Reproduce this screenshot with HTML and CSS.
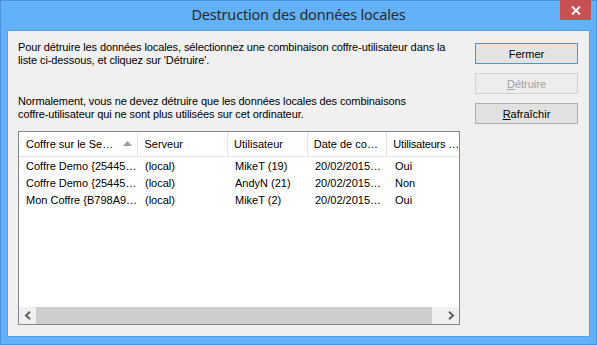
FILE: index.html
```html
<!DOCTYPE html>
<html lang="fr">
<head>
<meta charset="utf-8">
<title>Destruction des données locales</title>
<link rel="stylesheet" href="styles.css">
</head>
<body>
<div class="window">
  <div class="titlebar">
    <div></div>
    <div class="title">Destruction des données locales</div>
    <div class="close">
      <svg width="10" height="9" viewBox="0 0 10 9"><path d="M1 0.5 L9 8.5 M9 0.5 L1 8.5" stroke="#fff" stroke-width="2" fill="none"/></svg>
    </div>
  </div>
  <div class="client">
    <div class="main">
      <p class="para first">Pour détruire les données locales, sélectionnez une combinaison coffre-utilisateur dans la<br>liste ci-dessous, et cliquez sur 'Détruire'.</p>
      <p class="para second">Normalement, vous ne devez détruire que les données locales des combinaisons<br>coffre-utilisateur qui ne sont plus utilisées sur cet ordinateur.</p>
      <div class="list">
        <div class="header">
          <div class="col c1 hcell">Coffre sur le Se…<span class="sort"><svg width="9" height="5" viewBox="0 0 9 5"><path d="M0 5 L4.5 0 L9 5 Z" fill="#9b9b9b"/></svg></span></div>
          <div class="col c2 hcell">Serveur</div>
          <div class="col c3 hcell">Utilisateur</div>
          <div class="col c4 hcell">Date de co…</div>
          <div class="col c5 hcell last">Utilisateurs …</div>
        </div>
        <div class="rows">
          <div class="row"><div class="col c1">Coffre Demo {25445…</div><div class="col c2">(local)</div><div class="col c3">MikeT (19)</div><div class="col c4">20/02/2015…</div><div class="col c5">Oui</div></div>
          <div class="row"><div class="col c1">Coffre Demo {25445…</div><div class="col c2">(local)</div><div class="col c3">AndyN (21)</div><div class="col c4">20/02/2015…</div><div class="col c5">Non</div></div>
          <div class="row"><div class="col c1">Mon Coffre {B798A9…</div><div class="col c2">(local)</div><div class="col c3">MikeT (2)</div><div class="col c4">20/02/2015…</div><div class="col c5">Oui</div></div>
        </div>
        <div class="hscroll">
          <div class="arrow"><svg width="8" height="9" viewBox="0 0 8 9"><path d="M6 0.8 L2 4.5 L6 8.2" stroke="#606060" stroke-width="2" fill="none"/></svg></div>
          <div class="thumb"></div>
          <div class="track"></div>
          <div class="arrow"><svg width="8" height="9" viewBox="0 0 8 9"><path d="M2 0.8 L6 4.5 L2 8.2" stroke="#606060" stroke-width="2" fill="none"/></svg></div>
        </div>
      </div>
    </div>
    <div class="buttons">
      <div class="btn default">Fermer</div>
      <div class="btn disabled"><u>D</u>étruire</div>
      <div class="btn"><u>R</u>afraîchir</div>
    </div>
  </div>
</div>
</body>
</html>
```
FILE: styles.css
```css
* { box-sizing: border-box; }
html, body { margin: 0; padding: 0; }
body {
  width: 597px;
  height: 345px;
  overflow: hidden;
  font-family: "Liberation Sans", Arial, sans-serif;
  font-size: 11px;
  color: #000;
}
.window {
  width: 597px;
  height: 345px;
  background: #63b1f8;
  border: 1px solid #4d92dc;
  display: flex;
  flex-direction: column;
}
.titlebar {
  height: 29px;
  display: grid;
  grid-template-columns: 1fr auto 1fr;
  align-items: start;
}
.title {
  font-family: "Noto Sans", "Open Sans", sans-serif;
  font-size: 14.5px;
  color: #2a2a2a;
  line-height: 29px;
  margin-top: -1px;
  letter-spacing: -0.2px;
}
.close {
  justify-self: end;
  width: 31px;
  height: 20px;
  margin-top: -1px;
  margin-right: 5px;
  background: #c75050;
  display: flex;
  align-items: center;
  justify-content: center;
}
.client {
  flex: 1;
  margin: 0 6px 7px 6px;
  background: #f0f0f0;
  border: 1px solid #579de6;
  display: flex;
  padding: 12px 11px 11px 10px;
}
.main {
  width: 442px;
  display: flex;
  flex-direction: column;
}
.para {
  margin: 0;
  line-height: 13px;
  white-space: nowrap;
  letter-spacing: -0.1px;
}
.first { margin-top: -2px; }
.second { margin-top: 28px; }
.list {
  margin-top: 10px;
  flex: 1;
  background: #fff;
  border: 1px solid #828790;
  display: flex;
  flex-direction: column;
}
.header {
  height: 25px;
  display: flex;
  border-bottom: 1px solid #e5e5e5;
}
.col {
  padding-left: 6px;
  white-space: nowrap;
  overflow: hidden;
}
.c1 { width: 120px; padding-left: 7px; }
.c2 { width: 90px; }
.c3 { width: 80px; }
.c4 { width: 80px; }
.c5 { flex: 1; }
.hcell {
  display: flex;
  align-items: center;
  border-right: 1px solid #e5e5e5;
}
.hcell.last { border-right: none; overflow: visible; letter-spacing: -0.2px; }
.sort {
  margin-left: 10px;
  display: flex;
  margin-top: -1px;
}
.rows {
  flex: 1;
  padding-top: 1px;
}
.row {
  height: 17px;
  line-height: 17px;
  display: flex;
}
.hscroll {
  height: 17px;
  display: flex;
  background: #f0f0f0;
}
.arrow {
  width: 17px;
  display: flex;
  align-items: center;
  justify-content: center;
}
.thumb {
  width: 396px;
  background: #cdcdcd;
}
.track { flex: 1; }
.buttons {
  margin-left: auto;
  display: flex;
  flex-direction: column;
  gap: 9px;
}
.btn {
  width: 103px;
  height: 21px;
  border: 1px solid #adadad;
  background: #e1e1e1;
  display: flex;
  align-items: center;
  justify-content: center;
  font-size: 11px;
}
.btn u { text-decoration: underline; }
.btn.default {
  border-color: #3c99ed;
  background: #e3e3e3;
}
.btn.disabled {
  border-color: #d3d3d3;
  background: #ededed;
  color: #a0a0a0;
}
```
